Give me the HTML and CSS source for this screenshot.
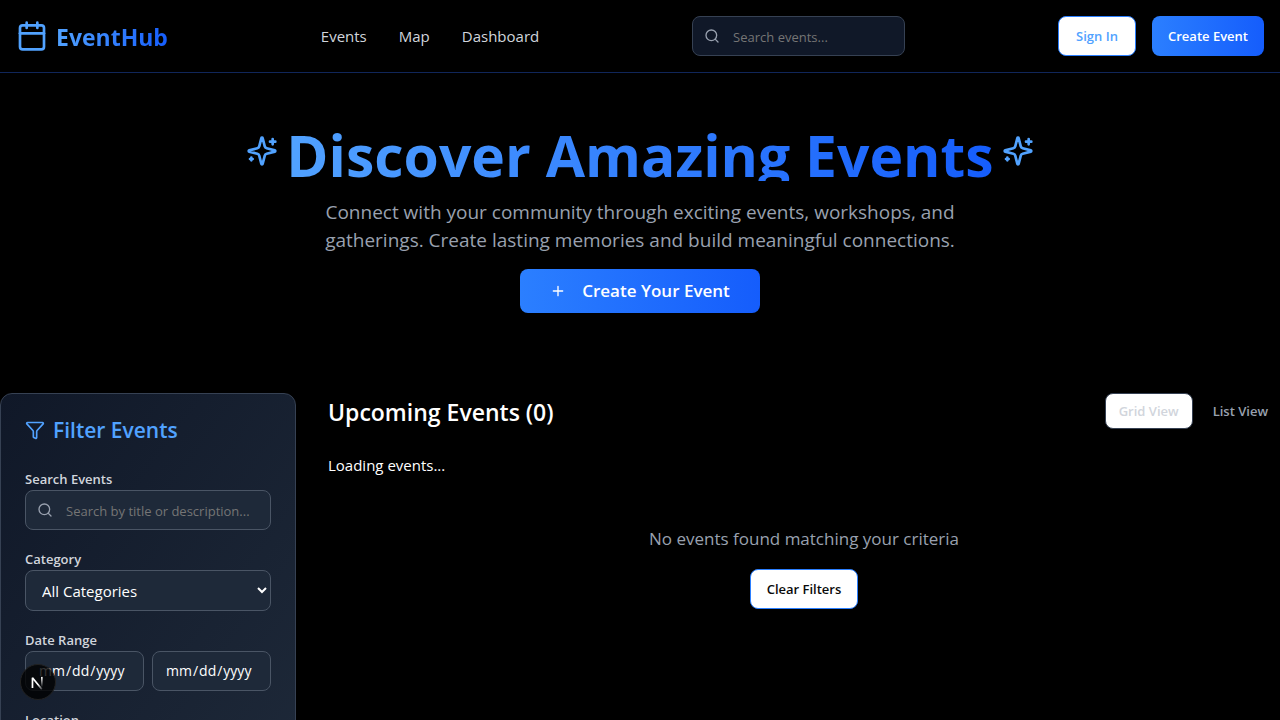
FILE: index.html
```html
<!DOCTYPE html>
<html lang="en-US">
<head>
<meta charset="utf-8">
<meta name="viewport" content="width=device-width, initial-scale=1">
<title>EventHub</title>
<link rel="stylesheet" href="styles.css">
</head>
<body>
<header class="site-header">
  <a class="logo" href="#">
    <svg class="icon icon-lg" viewBox="0 0 24 24" aria-hidden="true"><path d="M8 2v4M16 2v4"/><rect width="18" height="18" x="3" y="4" rx="2"/><path d="M3 10h18"/></svg>
    <span class="logo-text">EventHub</span>
  </a>
  <nav class="nav">
    <a href="#">Events</a>
    <a href="#">Map</a>
    <a href="#">Dashboard</a>
  </nav>
  <div class="search header-search">
    <svg class="icon icon-sm search-icon" viewBox="0 0 24 24" aria-hidden="true"><circle cx="11" cy="11" r="8"/><path d="m21 21-4.300-4.300"/></svg>
    <input class="control search-input" type="search" placeholder="Search events..." aria-label="Search events">
  </div>
  <div class="actions">
    <button class="btn btn-outline btn-signin" type="button">Sign In</button>
    <button class="btn btn-primary" type="button">Create Event</button>
  </div>
</header>

<section class="hero">
  <div class="hero-title">
    <svg class="icon icon-lg" viewBox="0 0 24 24" aria-hidden="true"><path d="M9.937 15.5A2 2 0 0 0 8.5 14.063l-6.135-1.582a.5.5 0 0 1 0-.962L8.500 9.936A2 2 0 0 0 9.937 8.500l1.582-6.135a.5.5 0 0 1 .963 0L14.063 8.500A2 2 0 0 0 15.500 9.937l6.135 1.581a.5.5 0 0 1 0 .964L15.500 14.063a2 2 0 0 0-1.437 1.437l-1.582 6.135a.5.5 0 0 1-.963 0z"/><path d="M20 3v4M22 5h-4M4 17v2M5 18H3"/></svg>
    <h1>Discover Amazing Events</h1>
    <svg class="icon icon-lg" viewBox="0 0 24 24" aria-hidden="true"><path d="M9.937 15.5A2 2 0 0 0 8.5 14.063l-6.135-1.582a.5.5 0 0 1 0-.962L8.500 9.936A2 2 0 0 0 9.937 8.500l1.582-6.135a.5.5 0 0 1 .963 0L14.063 8.500A2 2 0 0 0 15.500 9.937l6.135 1.581a.5.5 0 0 1 0 .964L15.500 14.063a2 2 0 0 0-1.437 1.437l-1.582 6.135a.5.5 0 0 1-.963 0z"/><path d="M20 3v4M22 5h-4M4 17v2M5 18H3"/></svg>
  </div>
  <p class="hero-text">Connect with your community through exciting events, workshops, and gatherings. Create lasting memories and build meaningful connections.</p>
  <button class="btn btn-primary btn-lg" type="button">
    <svg class="icon icon-sm" viewBox="0 0 24 24" aria-hidden="true"><path d="M5 12h14M12 5v14"/></svg>
    Create Your Event
  </button>
</section>

<div class="layout">
  <aside class="filters">
    <h2 class="filters-title">
      <svg class="icon icon-md" viewBox="0 0 24 24" aria-hidden="true"><path d="M10 20a1 1 0 0 0 .553.895l2 1A1 1 0 0 0 14 21v-7a2 2 0 0 1 .517-1.341L21.740 4.670A1 1 0 0 0 21 3H3a1 1 0 0 0-.742 1.670l7.225 7.989A2 2 0 0 1 10 14z"/></svg>
      Filter Events
    </h2>
    <div class="field">
      <label for="filter-search">Search Events</label>
      <div class="search">
        <svg class="icon icon-sm search-icon" viewBox="0 0 24 24" aria-hidden="true"><circle cx="11" cy="11" r="8"/><path d="m21 21-4.300-4.300"/></svg>
        <input class="control search-input" id="filter-search" type="search" placeholder="Search by title or description...">
      </div>
    </div>
    <div class="field">
      <label for="filter-category">Category</label>
      <select class="control select" id="filter-category"><option>All Categories</option></select>
    </div>
    <div class="field">
      <label for="filter-from">Date Range</label>
      <div class="dates">
        <input class="control date" id="filter-from" type="date">
        <input class="control date" type="date" aria-label="End date">
      </div>
    </div>
    <div class="field">
      <label for="filter-location">Location</label>
      <input class="control" id="filter-location" type="text">
    </div>
  </aside>

  <main class="events">
    <div class="events-head">
      <h2>Upcoming Events (0)</h2>
      <div class="views">
        <button class="btn btn-view is-active" type="button">Grid View</button>
        <button class="btn btn-view" type="button">List View</button>
      </div>
    </div>
    <p class="loading">Loading events...</p>
    <div class="empty">
      <p>No events found matching your criteria</p>
      <button class="btn btn-outline" type="button">Clear Filters</button>
    </div>
  </main>
</div>

<button class="dev-badge" type="button" aria-label="Open dev tools">
  <svg viewBox="0 0 40 40" aria-hidden="true">
    <defs>
      <linearGradient id="fade-diagonal" gradientUnits="userSpaceOnUse" x1="21" y1="22" x2="27" y2="29"><stop stop-color="#fff"/><stop offset="1" stop-color="#fff" stop-opacity="0"/></linearGradient>
      <linearGradient id="fade-stem" gradientUnits="userSpaceOnUse" x1="25" y1="14" x2="25" y2="26"><stop stop-color="#fff"/><stop offset="1" stop-color="#fff" stop-opacity="0"/></linearGradient>
    </defs>
    <path d="M13.500 27V15L24.500 28.500" fill="none" stroke="url(#fade-diagonal)" stroke-width="2" stroke-linejoin="bevel"/>
    <path d="M24.500 14v12" fill="none" stroke="url(#fade-stem)" stroke-width="2"/>
  </svg>
</button>
</body>
</html>
```
FILE: styles.css
```css
*, *::before, *::after { box-sizing: border-box; }

body {
  margin: 0;
  background: #000;
  color: #fff;
  font-family: "Open Sans", "Noto Sans", sans-serif;
  font-size: 15px;
  line-height: 24px;
}

h1, h2, p { margin: 0; }
a { color: inherit; text-decoration: none; }
button, input, select { font: inherit; }

.icon {
  flex: none;
  fill: none;
  stroke: currentColor;
  stroke-width: 2;
  stroke-linecap: round;
  stroke-linejoin: round;
}
.icon-sm { width: 16px; height: 16px; }
.icon-md { width: 20px; height: 20px; }
.icon-lg { width: 32px; height: 32px; color: #51a2ff; }

.site-header {
  display: flex;
  align-items: center;
  justify-content: space-between;
  padding: 16px;
  border-bottom: 1px solid #10265a;
}

.logo { display: flex; align-items: center; gap: 8px; }
.logo-text,
.hero h1 {
  background: linear-gradient(to right, #51a2ff, #155dfc);
  background-clip: text;
  color: transparent;
}
.logo-text { padding-top: 2px; font-size: 23px; font-weight: 700; line-height: 30px; }

.nav { display: flex; gap: 32px; color: #d1d5dc; }

.control {
  display: block;
  width: 100%;
  min-width: 0;
  height: 40px;
  margin: 0;
  padding: 8px 12px;
  border: 1px solid #4a5565;
  border-radius: 8px;
  background: #1e2939;
  color: #fff;
  font-size: 13px;
  line-height: 20px;
}
.control::placeholder { color: #757575; opacity: 1; }
.control::-webkit-calendar-picker-indicator { display: none; }

.search { position: relative; }
.search-icon { position: absolute; top: 12px; left: 12px; color: #99a1af; }
.search-input { padding: 10px 8px 8px 40px; appearance: none; }
.header-search .control { width: 213px; background: #101828; border-color: #364153; }

.select { height: 41px; font-size: 15px; line-height: 24px; }
.date { font-size: 14px; }

.actions, .views { display: flex; }
.actions { gap: 16px; }
.views { gap: 8px; }

.btn {
  display: inline-flex;
  align-items: center;
  justify-content: center;
  height: 40px;
  padding: 0 16px;
  border: 0;
  border-radius: 8px;
  font-size: 13px;
  font-weight: 600;
  line-height: 20px;
  white-space: nowrap;
  cursor: pointer;
}
.btn-primary { background: linear-gradient(to right, #2b7fff, #155dfc); color: #fff; }
.btn-outline { border: 1px solid #2b7fff; background: #fff; color: #0a0a0a; }
.btn-signin { min-width: 78px; color: #51a2ff; }
.btn-lg { gap: 16px; height: 44px; padding: 0 30px; font-size: 17px; }
.btn-view { height: 36px; padding: 0 12px; background: transparent; color: #99a1af; }
.btn-view.is-active { min-width: 88px; border: 1px solid #364153; background: #fff; color: #d1d5dc; }

.hero {
  display: flex;
  flex-direction: column;
  align-items: center;
  padding: 48px 16px 80px;
}
.hero-title { display: flex; align-items: center; gap: 8px; }
.hero h1 { padding-top: 8px; font-size: 57px; font-weight: 700; line-height: 52px; }
.hero-text {
  max-width: 672px;
  margin: 17px 0 15px;
  color: #99a1af;
  font-size: 19px;
  line-height: 28px;
  text-align: center;
}

.layout {
  display: grid;
  grid-template-columns: 296px minmax(0, 1fr);
  align-items: start;
  gap: 32px;
}

.filters {
  display: flex;
  flex-direction: column;
  gap: 20px;
  padding: 24px;
  border: 1px solid #364153;
  border-radius: 12px;
  background: linear-gradient(to bottom right, #101828, #1e2939);
}
.filters-title {
  display: flex;
  align-items: center;
  gap: 8px;
  margin-bottom: 8px;
  color: #51a2ff;
  font-size: 21px;
  font-weight: 600;
  line-height: 24px;
}
.field label {
  display: block;
  padding-bottom: 2px;
  color: #d1d5dc;
  font-size: 13px;
  font-weight: 600;
  line-height: 18px;
}
.dates { display: grid; grid-template-columns: 1fr 1fr; gap: 8px; }

.events-head { display: flex; align-items: center; justify-content: space-between; margin-bottom: 24px; }
.events-head h2 { padding-top: 2px; font-size: 23px; font-weight: 600; line-height: 32px; }
.empty {
  display: flex;
  flex-direction: column;
  align-items: center;
  gap: 16px;
  padding: 48px 0;
}
.empty p { color: #99a1af; font-size: 17px; line-height: 28px; }

.dev-badge {
  position: fixed;
  bottom: 20px;
  left: 20px;
  width: 36px;
  height: 36px;
  padding: 0;
  border: 1px solid #222;
  border-radius: 50%;
  background: rgba(0, 0, 0, 0.8);
}
.dev-badge svg { display: block; width: 100%; }
```
